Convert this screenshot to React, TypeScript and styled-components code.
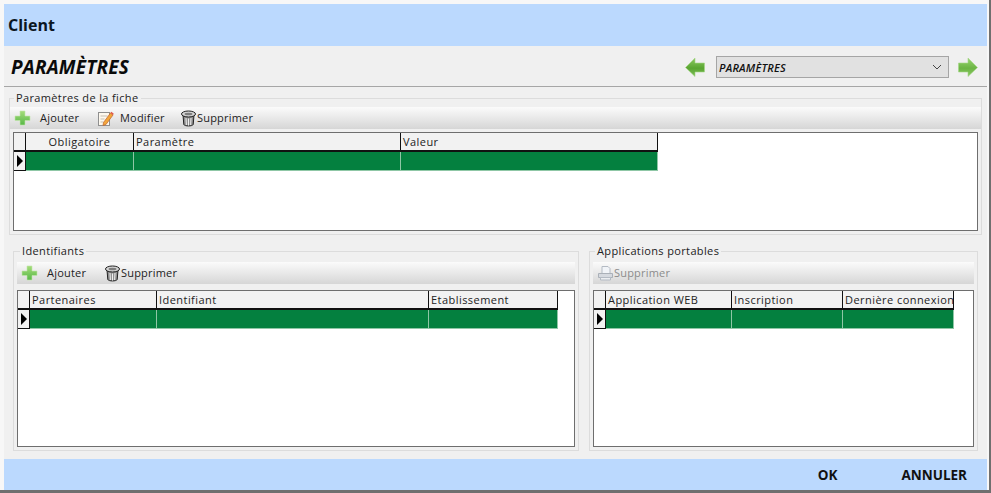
import React from "react";
import styled, { createGlobalStyle } from "styled-components";

const GlobalStyle = createGlobalStyle`
  html, body {
    margin: 0;
    padding: 0;
    background: #fff;
  }
  * {
    box-sizing: border-box;
  }
`;

const Window = styled.div`
  width: 991px;
  height: 493px;
  overflow: hidden;
  display: flex;
  flex-direction: column;
  padding: 4px 2px 0 4px;
  background: #f7f7f7;
  border-right: 2px solid #6f6f6f;
  border-bottom: 3px solid #6f6f6f;
  font-family: "Open Sans", "Noto Sans", sans-serif;
  font-size: 11px;
  color: #222;
`;

const TitleBar = styled.div`
  height: 42px;
  flex: none;
  background: #bbd9fe;
  display: flex;
  align-items: center;
  padding: 0 4px 0 4px;
  font-size: 16px;
  font-weight: 700;
  color: #0b1622;
`;

const Content = styled.div`
  flex: 1;
  display: flex;
  flex-direction: column;
  min-height: 0;
  background: #f0f0f0;
`;

const PageHeader = styled.div`
  height: 41px;
  flex: none;
  display: flex;
  align-items: center;
  padding: 2px 9px 0 7px;
  border-bottom: 1px solid #a6a6a6;
`;

const PageTitle = styled.div`
  flex: 1;
  font-size: 19px;
  font-weight: 700;
  font-style: italic;
  letter-spacing: 0.2px;
  color: #0a0a0a;
`;

const NavArrow = styled.svg`
  width: 20px;
  height: 20px;
  flex: none;
`;

const PageSelect = styled.div`
  width: 233px;
  height: 22px;
  margin: 0 9px 0 11px;
  display: flex;
  align-items: center;
  justify-content: space-between;
  padding: 0 6px 0 2px;
  background: #e1e1e1;
  border: 1px solid #a5a5a5;
  font-size: 11px;
  font-weight: 600;
  font-style: italic;
  letter-spacing: 0.2px;
  color: #111;
`;

const Group = styled.fieldset<{ $fill?: boolean }>`
  margin: 0;
  min-width: 0;
  padding: 0 3px 3px 3px;
  border: 1px solid #dcdcdc;
  height: ${(p) => (p.$fill ? "100%" : "auto")};
  display: flex;
  flex-direction: column;
`;

const Legend = styled.legend<{ $indent: number }>`
  margin-left: ${(p) => p.$indent}px;
  padding: 0 2px 2px 2px;
  font-size: 11px;
  line-height: 13px;
  letter-spacing: 0.36px;
  color: #222;
`;

const TopSection = styled.div`
  padding: 4px 5px 0 5px;
  height: 148px;
  flex: none;
`;

const BottomSection = styled.div`
  flex: 1;
  min-height: 0;
  display: grid;
  grid-template-columns: 566px 389px;
  gap: 10px;
  padding: 9px 9px 8px 9px;
`;

const Toolbar = styled.div<{ $mt: number; $mb: number; $bleed?: boolean }>`
  height: 22px;
  flex: none;
  margin: ${(p) => `${p.$mt}px ${p.$bleed ? -3 : 0}px ${p.$mb}px ${p.$bleed ? -3 : 0}px`};
  display: flex;
  align-items: center;
  padding-left: 4px;
  background: linear-gradient(#fbfbfb, #d6d6d6);
`;

const ToolButton = styled.div<{ $gap: number; $width: number; $disabled?: boolean }>`
  width: ${(p) => p.$width}px;
  display: flex;
  align-items: center;
  gap: ${(p) => p.$gap}px;
  letter-spacing: 0.2px;
  color: ${(p) => (p.$disabled ? "#8c8c8c" : "#222")};
`;

const ToolLabel = styled.span`
  margin-bottom: 2px;
`;

const GridBox = styled.div`
  flex: 1;
  min-height: 0;
  background: #fff;
  border: 1px solid #6e6e6e;
`;

const HeaderRow = styled.div<{ $cols: string }>`
  display: grid;
  width: max-content;
  grid-template-columns: ${(p) => p.$cols};
  height: 19px;
  background: #f2f2f2;
  border-bottom: 2px solid #111;
`;

const HeaderCell = styled.div<{ $center?: boolean }>`
  padding: 0 2px;
  line-height: 17px;
  letter-spacing: 0.45px;
  white-space: nowrap;
  overflow: hidden;
  text-align: ${(p) => (p.$center ? "center" : "left")};
  border-right: 1px solid #111;
  color: #222;
`;

const DataRow = styled.div<{ $cols: string }>`
  display: grid;
  width: max-content;
  grid-template-columns: ${(p) => p.$cols};
  height: 19px;
`;

const RowHeader = styled.div`
  display: flex;
  align-items: center;
  padding-left: 3px;
  background: #f2f2f2;
  border-right: 1px solid #111;
  border-bottom: 1px solid #111;
`;

const RowPointer = styled.div`
  width: 0;
  height: 0;
  border-top: 6px solid transparent;
  border-bottom: 6px solid transparent;
  border-left: 6px solid #000;
`;

const DataCell = styled.div`
  background: #04803f;
  border-right: 1px solid #8fc7a6;
  border-bottom: 1px solid #8fc7a6;
`;

const Footer = styled.div`
  height: 31px;
  flex: none;
  display: flex;
  align-items: center;
  justify-content: flex-end;
  background: #bbd9fe;
  padding-right: 20px;
  gap: 64px;
  font-size: 13.5px;
  font-weight: 700;
  color: #111;
`;

const PlusIcon = () => (
  <svg width="17" height="16" viewBox="0 0 17 16">
    <defs>
      <linearGradient id="plusFill" x1="0" y1="0" x2="0" y2="1">
        <stop offset="0" stopColor="#a5dc7a" />
        <stop offset="1" stopColor="#58b848" />
      </linearGradient>
    </defs>
    <path
      d="M6 1h5v5h5v4.500h-5V15H6v-4.500H1V6h5z"
      fill="url(#plusFill)"
      stroke="#c4e8ac"
      strokeWidth="0.6"
    />
  </svg>
);

const NoteIcon = () => (
  <svg width="17" height="17" viewBox="0 0 17 17">
    <rect x="1.500" y="2.500" width="11" height="13" fill="#fdf8ee" stroke="#8f8f8f" />
    <path d="M3.500 6h7M3.500 9h4M3.500 12h3" stroke="#c7bfb2" />
    <path d="M6.500 12.500 13.500 3l2.500 2-7 9.500-3 1z" fill="#f2a63a" stroke="#c0602a" strokeWidth="0.7" />
    <path d="M13.500 3l.8-1.200 2.500 2-.8 1.200z" fill="#e0574a" />
  </svg>
);

const TrashIcon = () => (
  <svg width="15" height="17" viewBox="0 0 15 17">
    <path d="M2 5l.8 9.500c.6 1.900 8.800 1.900 9.400 0L13 5z" fill="#8f8f8f" stroke="#222" />
    <path d="M5 8l.4 7M7.500 8.500V15.500M10 8l-.4 7" stroke="#f0f0f0" />
    <ellipse cx="7.500" cy="4" rx="7" ry="3" fill="#d6d6d6" stroke="#222" />
    <ellipse cx="7.500" cy="4" rx="4" ry="1.300" fill="#7d7d7d" />
  </svg>
);

const PrinterIcon = () => (
  <svg width="17" height="16" viewBox="0 0 17 16">
    <path d="M5 1.500h6l2 2v5H5z" fill="#f1f4f8" stroke="#b3bac3" />
    <path d="M1.500 8.500h14v4h-14z" fill="#d5d9df" stroke="#aab0b8" />
    <path d="M3.500 12.500h10v2.500h-10z" fill="#eceef1" stroke="#b3bac3" />
  </svg>
);

const LeftArrow = () => (
  <NavArrow viewBox="0 0 20 20">
    <defs>
      <linearGradient id="arrowLeft" x1="0" y1="0" x2="0" y2="1">
        <stop offset="0" stopColor="#8ccb62" />
        <stop offset="0.55" stopColor="#5aa532" />
        <stop offset="1" stopColor="#7bbd55" />
      </linearGradient>
    </defs>
    <path d="M0.500 10.500 10 1v5h9.500v9H10v4.500z" fill="url(#arrowLeft)" stroke="#a4d686" strokeWidth="0.6" />
  </NavArrow>
);

const RightArrow = () => (
  <NavArrow viewBox="0 0 20 20">
    <defs>
      <linearGradient id="arrowRight" x1="0" y1="0" x2="0" y2="1">
        <stop offset="0" stopColor="#98d470" />
        <stop offset="0.55" stopColor="#6cb544" />
        <stop offset="1" stopColor="#8ac764" />
      </linearGradient>
    </defs>
    <path d="M19.500 10.500 10 1v5H0.500v9H10v4.500z" fill="url(#arrowRight)" stroke="#a4d686" strokeWidth="0.6" />
  </NavArrow>
);

const ChevronIcon = () => (
  <svg width="10" height="6" viewBox="0 0 10 6">
    <path d="M1 1l4 4 4-4" fill="none" stroke="#444" />
  </svg>
);

interface TableProps {
  cols: number[];
  headers: string[];
  centerFirst?: boolean;
}

// la grille : entete + une seule ligne selectionnee
const Table: React.FC<TableProps> = ({ cols, headers, centerFirst }) => {
  const template = cols.map((c) => `${c}px`).join(" ");
  return (
    <GridBox>
      <HeaderRow $cols={template}>
        <HeaderCell />
        {headers.map((h, i) => (
          <HeaderCell key={h} $center={centerFirst && i === 0}>
            {h}
          </HeaderCell>
        ))}
      </HeaderRow>
      <DataRow $cols={template}>
        <RowHeader>
          <RowPointer />
        </RowHeader>
        {headers.map((h) => (
          <DataCell key={h} />
        ))}
      </DataRow>
    </GridBox>
  );
};

const App: React.FC = () => {
  return (
    <>
      <GlobalStyle />
      <Window>
        <TitleBar>Client</TitleBar>
        <Content>
          <PageHeader>
            <PageTitle>PARAMÈTRES</PageTitle>
            <LeftArrow />
            <PageSelect>
              PARAMÈTRES
              <ChevronIcon />
            </PageSelect>
            <RightArrow />
          </PageHeader>
          <TopSection>
            <Group $fill>
              <Legend $indent={1}>Paramètres de la fiche</Legend>
              <Toolbar $mt={1} $mb={3} $bleed>
                <ToolButton $gap={9} $width={83}>
                  <PlusIcon />
                  <ToolLabel>Ajouter</ToolLabel>
                </ToolButton>
                <ToolButton $gap={6} $width={84}>
                  <NoteIcon />
                  <ToolLabel>Modifier</ToolLabel>
                </ToolButton>
                <ToolButton $gap={1} $width={90}>
                  <TrashIcon />
                  <ToolLabel>Supprimer</ToolLabel>
                </ToolButton>
              </Toolbar>
              <Table
                cols={[12, 108, 267, 257]}
                headers={["Obligatoire", "Paramètre", "Valeur"]}
                centerFirst
              />
            </Group>
          </TopSection>
          <BottomSection>
            <Group>
              <Legend $indent={3}>Identifiants</Legend>
              <Toolbar $mt={3} $mb={6}>
                <ToolButton $gap={9} $width={84}>
                  <PlusIcon />
                  <ToolLabel>Ajouter</ToolLabel>
                </ToolButton>
                <ToolButton $gap={1} $width={90}>
                  <TrashIcon />
                  <ToolLabel>Supprimer</ToolLabel>
                </ToolButton>
              </Toolbar>
              <Table
                cols={[12, 127, 272, 129]}
                headers={["Partenaires", "Identifiant", "Etablissement"]}
              />
            </Group>
            <Group>
              <Legend $indent={2}>Applications portables</Legend>
              <Toolbar $mt={3} $mb={6}>
                <ToolButton $gap={0} $width={90} $disabled>
                  <PrinterIcon />
                  <ToolLabel>Supprimer</ToolLabel>
                </ToolButton>
              </Toolbar>
              <Table
                cols={[12, 126, 111, 111]}
                headers={["Application WEB", "Inscription", "Dernière connexion"]}
              />
            </Group>
          </BottomSection>
        </Content>
        <Footer>
          <span>OK</span>
          <span>ANNULER</span>
        </Footer>
      </Window>
    </>
  );
};

export default App;
